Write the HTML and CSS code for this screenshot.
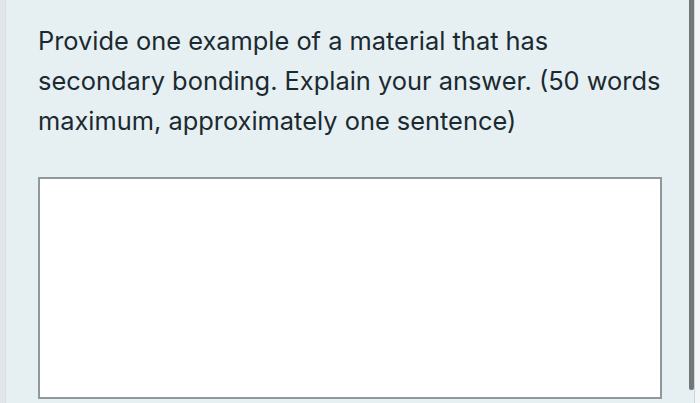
FILE: index.html
```html
<!DOCTYPE html>
<html>
<head>
<meta charset="utf-8">
<link rel="stylesheet" href="styles.css">
</head>
<body>
<div class="page">
  <div class="edge-left"></div>
  <main class="content">
    <p class="question">Provide one example of a material that has secondary bonding. Explain your answer. (50 words maximum, approximately one sentence)</p>
    <div class="answer"></div>
  </main>
  <div class="scroll">
    <div class="scroll-thumb"></div>
  </div>
  <div class="edge-right"></div>
</div>
</body>
</html>
```
FILE: styles.css
```css
html, body {
  margin: 0;
  padding: 0;
  width: 700px;
  height: 403px;
  overflow: hidden;
  background: #e6f0f3;
}
.page {
  display: flex;
  width: 700px;
  height: 403px;
}
.edge-left {
  width: 5px;
  flex-shrink: 0;
  background: #e1e6ea;
  border-right: 1px solid #d9e0e4;
}
.content {
  width: 651px;
  flex-shrink: 0;
  padding: 21px 0 0 32px;
  display: flex;
  flex-direction: column;
}
.question {
  margin: 0;
  font-family: Inter, "Noto Sans", sans-serif;
  font-size: 25.4px;
  line-height: 40px;
  color: #1b2a30;
  width: 634px;
}
.answer {
  margin-top: 36px;
  width: 620px;
  height: 218px;
  flex-shrink: 0;
  background: #ffffff;
  border: 2px solid #8f989d;
}
.scroll {
  width: 5px;
  flex-shrink: 0;
}
.scroll-thumb {
  width: 5px;
  height: 390px;
  background: #6f7877;
  border-radius: 0 0 2px 2px;
}
.edge-right {
  width: 5px;
  flex-shrink: 0;
  background: #f3f5f7;
  border-left: 1px solid #cfd5d8;
}
```
